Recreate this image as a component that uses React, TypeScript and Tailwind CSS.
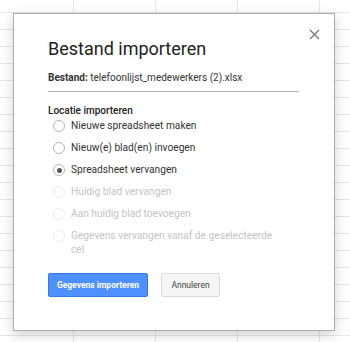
import React from 'react';

const options = [
    { label: 'Nieuwe spreadsheet maken', checked: false, disabled: false },
    { label: 'Nieuw(e) blad(en) invoegen', checked: false, disabled: false },
    { label: 'Spreadsheet vervangen', checked: true, disabled: false },
    { label: 'Huidig blad vervangen', checked: false, disabled: true },
    { label: 'Aan huidig blad toevoegen', checked: false, disabled: true },
    { label: 'Gegevens vervangen vanaf de geselecteerde cel', checked: false, disabled: true },
];

const Radio: React.FC<{ checked: boolean; disabled: boolean }> = ({ checked, disabled }) => (
    <span
        className={
            'mt-[1px] flex h-[12px] w-[12px] shrink-0 items-center justify-center rounded-full border ' +
            (disabled ? 'border-[#ececec]' : 'border-[#b5b5b5]')
        }
    >
        {checked ? <span className="h-[5px] w-[5px] rounded-full bg-[#555]" /> : null}
    </span>
);

const App: React.FC = () => {
    return (
        <div className="h-[342px] w-[350px] overflow-hidden bg-white bg-[linear-gradient(to_right,#e6e6e6_1px,transparent_1px),linear-gradient(to_bottom,#e6e6e6_1px,transparent_1px)] pt-[13px] pl-[13px] font-['Roboto',sans-serif] [background-position:73px_12px] [background-size:82px_17px]">
            {/* dialoog */}
            <div className="relative h-[318px] w-[322px] border border-[#acacac] bg-white px-[34px] pt-[23px] shadow-[0_4px_12px_rgba(0,0,0,0.18)]">
                <button className="absolute top-[15px] right-[14px] text-[#777]">
                    <svg width="11" height="11" viewBox="0 0 11 11">
                        <path d="M1 1L10 10M10 1L1 10" stroke="currentColor" strokeWidth="1.3" />
                    </svg>
                </button>

                <h2 className="text-[18px] leading-[24px] text-[#222]">Bestand importeren</h2>

                <div className="mt-[10px] w-[251px] border-b border-[#b3b3b3] pb-[6px] text-[10px] leading-[14px] text-[#333]">
                    <span className="font-bold">Bestand:</span> telefoonlijst_medewerkers (2).xlsx
                </div>

                <div className="mt-[12px] text-[10px] leading-[14px] font-medium text-[#222]">Locatie importeren</div>

                <ul className="mt-[-3px] flex flex-col pl-[5px]">
                    {options.map((o, i) => (
                        <li key={i} className="flex items-start gap-[6px] py-[4px]">
                            <Radio checked={o.checked} disabled={o.disabled} />
                            <span
                                className={
                                    'w-[216px] text-[10.2px] leading-[14px] ' +
                                    (o.disabled ? 'text-[#c4c4c4]' : 'text-[#333]')
                                }
                            >
                                {o.label}
                            </span>
                        </li>
                    ))}
                </ul>

                <div className="mt-[12px] flex gap-[13px]">
                    <button className="h-[24px] w-[100px] rounded-[2px] border border-[#3079ed] bg-[#4d90fe] text-[8.5px] font-bold text-white">
                        Gegevens importeren
                    </button>
                    <button className="h-[24px] w-[59px] rounded-[2px] border border-[#dcdcdc] bg-[#f5f5f5] text-[8.5px] text-[#444]">
                        Annuleren
                    </button>
                </div>
            </div>
        </div>
    );
};

export default App;
